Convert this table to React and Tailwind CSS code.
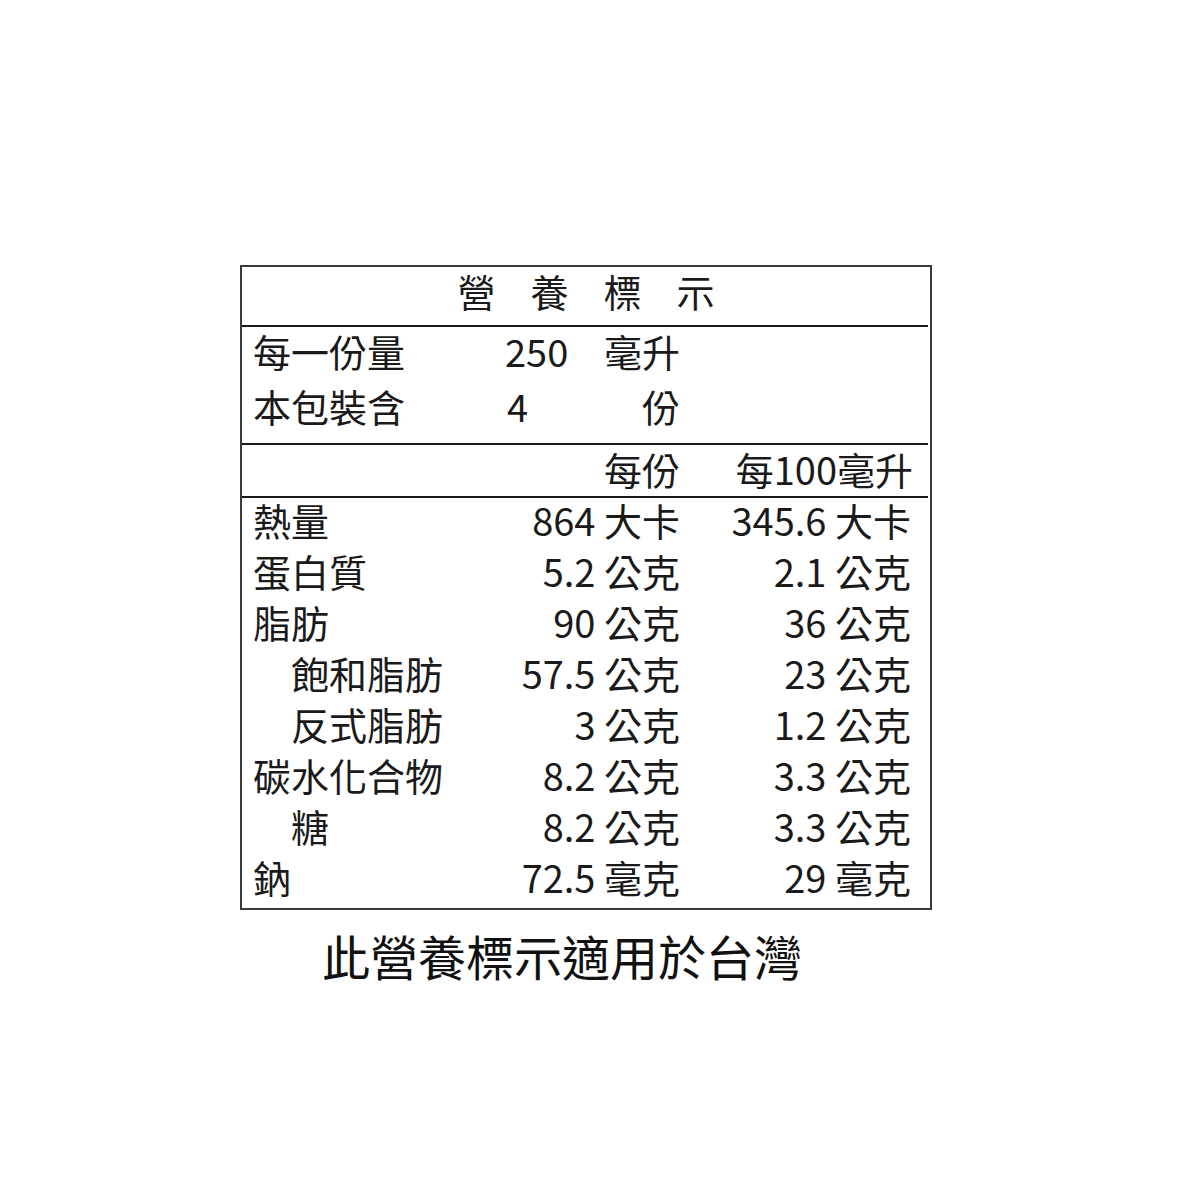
const font = { fontFamily: '"Noto Sans CJK TC", "Noto Sans CJK SC", sans-serif' };

const rows = [
  { name: "熱量", per: "864", perUnit: "大卡", per100: "345.6", per100Unit: "大卡" },
  { name: "蛋白質", per: "5.2", perUnit: "公克", per100: "2.1", per100Unit: "公克" },
  { name: "脂肪", per: "90", perUnit: "公克", per100: "36", per100Unit: "公克" },
  { name: "飽和脂肪", sub: true, per: "57.5", perUnit: "公克", per100: "23", per100Unit: "公克" },
  { name: "反式脂肪", sub: true, per: "3", perUnit: "公克", per100: "1.2", per100Unit: "公克" },
  { name: "碳水化合物", per: "8.2", perUnit: "公克", per100: "3.3", per100Unit: "公克" },
  { name: "糖", sub: true, per: "8.2", perUnit: "公克", per100: "3.3", per100Unit: "公克" },
  { name: "鈉", per: "72.5", perUnit: "毫克", per100: "29", per100Unit: "毫克" },
];

export default function App() {
  return (
    <div className="min-h-[1200px] w-[1200px] bg-white pt-[265px] text-[#1a1a1a]" style={font}>
      <div className="ml-[240px] w-[692px] h-[645px] border-2 border-[#3a3a3a]">
        <div className="h-[58px] flex justify-center items-center gap-[35px] text-[38px] leading-none pb-[10px]">
          <span>營</span>
          <span>養</span>
          <span>標</span>
          <span>示</span>
        </div>
        <div className="h-[2px] bg-[#1a1a1a] mr-[2px]" />

        <div className="h-[116px] pl-[11px] text-[38px] leading-none">
          <div className="h-[55px] flex items-center pb-[8px]">
            <div className="w-[240px]">每一份量</div>
            <div className="w-[187px] pl-[12px] flex justify-between">
              <span>250</span>
              <span>毫升</span>
            </div>
          </div>
          <div className="h-[55px] flex items-center pb-[8px]">
            <div className="w-[240px]">本包裝含</div>
            <div className="w-[187px] pl-[14px] flex justify-between">
              <span>4</span>
              <span>份</span>
            </div>
          </div>
        </div>
        <div className="h-[2px] bg-[#1a1a1a] mr-[2px]" />

        <div className="h-[51px] pl-[11px] flex items-center text-[38px] leading-none pb-[4px]">
          <div className="w-[240px]" />
          <div className="w-[187px] text-right">每份</div>
          <div className="w-[233px] text-right">每100毫升</div>
        </div>
        <div className="h-[2px] bg-[#1a1a1a] mr-[2px]" />

        <div className="pl-[11px] text-[38px] leading-none">
          {rows.map((r) => (
            <div key={r.name} className="h-[51px] flex items-center pb-[8px]">
              <div className={`w-[240px] ${r.sub ? "pl-[38px]" : ""}`}>{r.name}</div>
              <div className="w-[187px] text-right whitespace-nowrap">
                {r.per} {r.perUnit}
              </div>
              <div className="w-[231px] text-right whitespace-nowrap">
                {r.per100} {r.per100Unit}
              </div>
            </div>
          ))}
        </div>
      </div>

      <div className="ml-[322px] mt-[21px] text-[48px] leading-none text-[#111]">
        此營養標示適用於台灣
      </div>
    </div>
  );
}
